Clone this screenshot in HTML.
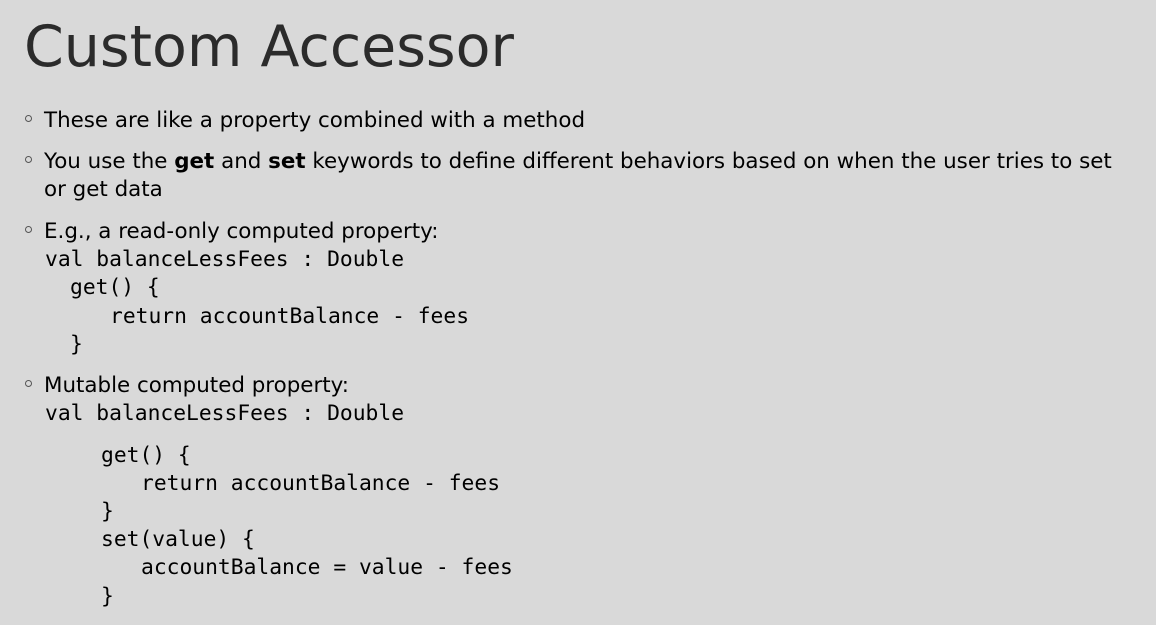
<!DOCTYPE html>
<html><head><style>
body{margin:0;width:1156px;height:625px;background:#d9d9d9;overflow:hidden;position:relative;font-family:"DejaVu Sans","Liberation Sans",sans-serif;color:#000}
.t{position:absolute;left:24px;top:12px;font-size:57px;line-height:70px;color:#2b2b2b;white-space:nowrap}
.l{position:absolute;white-space:nowrap;font-size:21.4px;line-height:22px}
.c{position:absolute;white-space:pre;font-family:"DejaVu Sans Mono","Liberation Mono",monospace;font-size:21.3px;line-height:22px}
.b{position:absolute;left:25px;width:5px;height:5px;border:1px solid #555;border-radius:50%}
</style></head><body>
<div class="t">Custom Accessor</div>
<div class="b" style="top:115px"></div>
<div class="l" style="left:44px;top:110px">These are like a property combined with a method</div>
<div class="b" style="top:156px"></div>
<div class="l" style="left:44px;top:151px">You use the <b>get</b> and <b>set</b> keywords to define different behaviors based on when the user tries to set</div>
<div class="l" style="left:44px;top:179px">or get data</div>
<div class="b" style="top:226px"></div>
<div class="l" style="left:44px;top:221px">E.g., a read-only computed property:</div>
<div class="c" style="left:45px;top:249px">val balanceLessFees : Double</div>
<div class="c" style="left:70px;top:277px">get() {</div>
<div class="c" style="left:110px;top:306px">return accountBalance - fees</div>
<div class="c" style="left:70px;top:334px">}</div>
<div class="b" style="top:380px"></div>
<div class="l" style="left:44px;top:375px">Mutable computed property:</div>
<div class="c" style="left:45px;top:403px">val balanceLessFees : Double</div>
<div class="c" style="left:101px;top:445px">get() {</div>
<div class="c" style="left:141px;top:473px">return accountBalance - fees</div>
<div class="c" style="left:101px;top:501px">}</div>
<div class="c" style="left:101px;top:529px">set(value) {</div>
<div class="c" style="left:141px;top:557px">accountBalance = value - fees</div>
<div class="c" style="left:101px;top:586px">}</div>
</body></html>
